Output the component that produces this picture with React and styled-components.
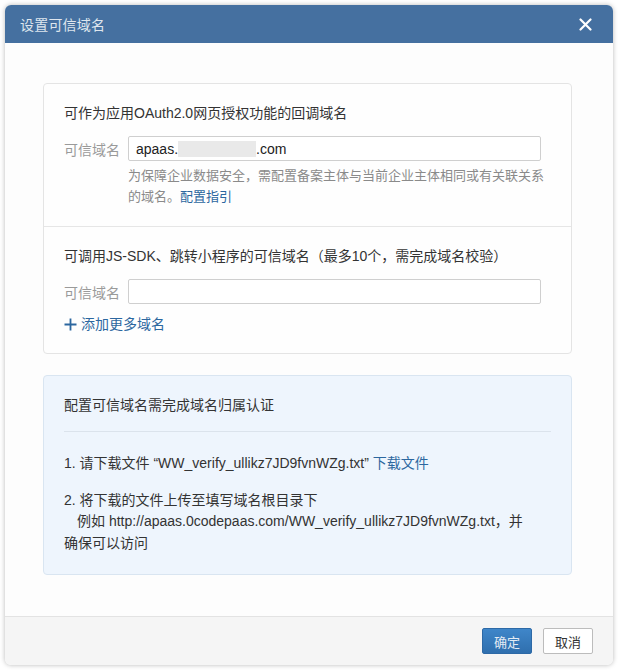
import React from 'react';
import styled, { createGlobalStyle } from 'styled-components';

const Global = createGlobalStyle`
  html, body {
    margin: 0;
    padding: 0;
    background: #ffffff;
  }
  body {
    font-family: "Liberation Sans", "Noto Sans CJK SC", Arial, sans-serif;
    color: #333;
  }
`;

const Page = styled.div`
  padding: 5px;
  box-sizing: border-box;
  height: 670px;
`;

const Dialog = styled.div`
  display: flex;
  flex-direction: column;
  height: 660px;
  border-radius: 6px;
  overflow: hidden;
  background: #fdfdfd;
  box-shadow: 0 0 5px rgba(0, 0, 0, 0.28);
`;

const Header = styled.div`
  display: flex;
  align-items: center;
  justify-content: space-between;
  height: 38px;
  padding: 0 20px 0 15px;
  background: #4570a0;
  flex-shrink: 0;
`;

const Title = styled.div`
  font-size: 14px;
  color: #dfe6ee;
  letter-spacing: 0.2px;
`;

const Close = styled.button`
  display: flex;
  align-items: center;
  justify-content: center;
  width: 16px;
  height: 16px;
  padding: 0;
  border: 0;
  background: none;
  cursor: pointer;
`;

const Body = styled.div`
  flex: 1;
  display: flex;
  flex-direction: column;
  gap: 21px;
  padding: 40px 41px 0 38px;
`;

const Card = styled.div`
  border: 1px solid #e4e4e4;
  border-radius: 4px;
  background: #fefefe;
`;

const Section = styled.div`
  padding: 19px 30px 19px 20px;
  & + & {
    border-top: 1px solid #e6e6e6;
  }
`;

const SectionTitle = styled.div`
  font-size: 14px;
  line-height: 20px;
  color: #333;
`;

const Row = styled.div`
  display: flex;
  align-items: center;
  gap: 7px;
  margin-top: ${p => p.$top || 13}px;
`;

const Label = styled.div`
  width: 57px;
  font-size: 14px;
  color: #9a9a9a;
  white-space: nowrap;
`;

const Input = styled.div`
  flex: 1;
  height: 25px;
  box-sizing: border-box;
  border: 1px solid #cfcfcf;
  border-radius: 2px;
  background: #fff;
  display: flex;
  align-items: center;
  padding: 0 7px;
  font-size: 14px;
  color: #222;
`;

const Masked = styled.span`
  display: inline-block;
  width: 78px;
  height: 16px;
  background: #e9e9e9;
  filter: blur(0.6px);
`;

const Note = styled.div`
  margin: 4px -10px 0 64px;
  font-size: 13px;
  line-height: 21px;
  color: #8a8a8a;
`;

const Link = styled.a`
  color: #2c679f;
  text-decoration: none;
  cursor: pointer;
`;

const AddLink = styled.a`
  display: flex;
  align-items: center;
  gap: 4px;
  margin-top: 10px;
  font-size: 14px;
  line-height: 20px;
  color: #2c679f;
  cursor: pointer;
`;

const InfoBox = styled.div`
  border: 1px solid #d9e5f1;
  border-radius: 4px;
  background: #eef5fd;
  padding: 19px 20px 20px;
`;

const InfoTitle = styled.div`
  font-size: 14px;
  line-height: 21px;
  color: #333;
  padding-bottom: 15px;
  border-bottom: 1px solid #dbe3ec;
`;

const Step = styled.div`
  font-size: 14px;
  line-height: 21.5px;
  color: #333;
  margin-top: ${p => p.$top}px;
`;

const Indent = styled.span`
  padding-left: 13px;
`;

const Footer = styled.div`
  display: flex;
  justify-content: flex-end;
  align-items: center;
  gap: 11px;
  height: 48px;
  padding: 0 20px;
  border-top: 1px solid #e3e3e3;
  background: #f5f5f5;
  flex-shrink: 0;
`;

const Button = styled.button`
  width: 50px;
  height: 26px;
  padding: 0;
  border-radius: 2px;
  font-family: inherit;
  font-size: 13px;
  cursor: pointer;
  border: 1px solid ${p => (p.$primary ? '#2d69a6' : '#bcbcbc')};
  background: ${p => (p.$primary ? 'linear-gradient(#3f86c9, #2f6fae)' : '#fff')};
  color: ${p => (p.$primary ? '#e3ebf4' : '#333')};
`;

export default function App() {
  return (
    <Page>
      <Global />
      <Dialog>
        <Header>
          <Title>设置可信域名</Title>
          <Close aria-label="close">
            <svg width="13" height="13" viewBox="0 0 13 13">
              <path d="M1.5 1.5 L11.5 11.5 M11.5 1.5 L1.5 11.5" stroke="#fff" strokeWidth="2.2" strokeLinecap="round" />
            </svg>
          </Close>
        </Header>
        <Body>
          <Card>
            <Section>
              <SectionTitle>可作为应用OAuth2.0网页授权功能的回调域名</SectionTitle>
              <Row>
                <Label>可信域名</Label>
                <Input>
                  apaas.<Masked />.com
                </Input>
              </Row>
              <Note>
                为保障企业数据安全，需配置备案主体与当前企业主体相同或有关联关系
                <br />
                的域名。<Link>配置指引</Link>
              </Note>
            </Section>
            <Section>
              <SectionTitle>可调用JS-SDK、跳转小程序的可信域名（最多10个，需完成域名校验）</SectionTitle>
              <Row $top={13}>
                <Label>可信域名</Label>
                <Input />
              </Row>
              <AddLink>
                <svg width="13" height="13" viewBox="0 0 13 13">
                  <path d="M6.5 0.5 V12.5 M0.5 6.5 H12.5" stroke="#2c679f" strokeWidth="1.8" />
                </svg>
                添加更多域名
              </AddLink>
            </Section>
          </Card>
          <InfoBox>
            <InfoTitle>配置可信域名需完成域名归属认证</InfoTitle>
            <Step $top={21}>
              1. 请下载文件 “WW_verify_ullikz7JD9fvnWZg.txt” <Link>下载文件</Link>
            </Step>
            <Step $top={15}>
              2. 将下载的文件上传至填写域名根目录下
              <br />
              <Indent>例如 http://apaas.0codepaas.com/WW_verify_ullikz7JD9fvnWZg.txt，并</Indent>
              <br />
              确保可以访问
            </Step>
          </InfoBox>
        </Body>
        <Footer>
          <Button $primary>确定</Button>
          <Button>取消</Button>
        </Footer>
      </Dialog>
    </Page>
  );
}
